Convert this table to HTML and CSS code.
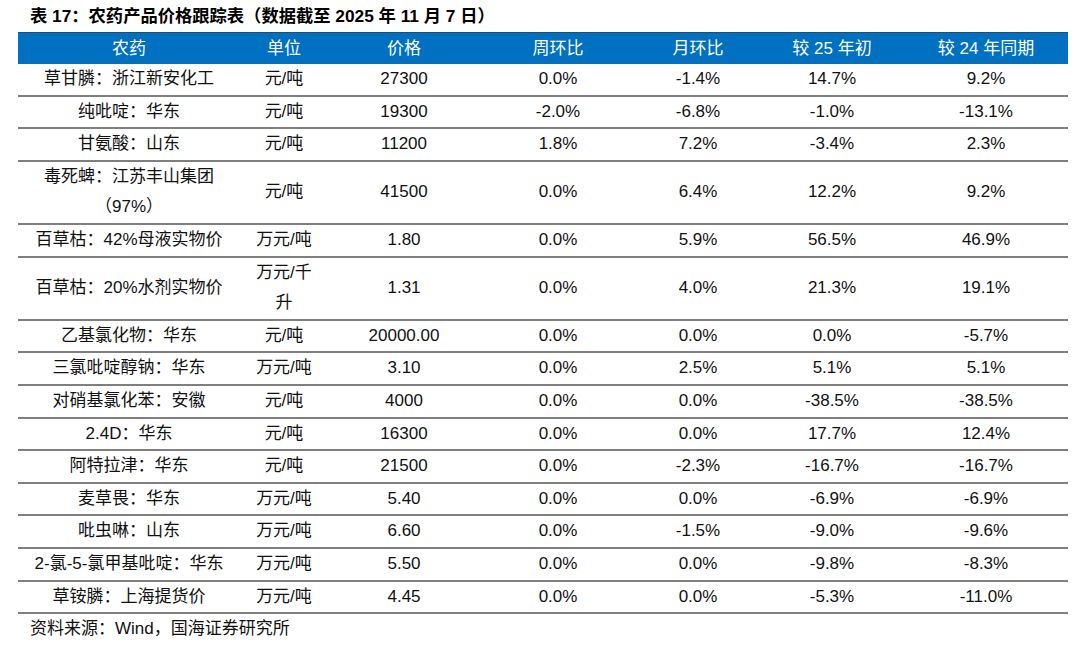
FILE: index.html
```html
<!DOCTYPE html>
<html lang="zh-CN">
<head>
<meta charset="utf-8">
<title>农药产品价格跟踪表</title>
<link rel="stylesheet" href="styles.css">
</head>
<body>
<div class="page">
  <div class="title">表 17：农药产品价格跟踪表（数据截至 2025 年 11 月 7 日）</div>
  <table class="tbl">
    <colgroup>
      <col class="c1"><col class="c2"><col class="c3"><col class="c4"><col class="c5"><col class="c6"><col class="c7">
    </colgroup>
    <thead>
      <tr><th>农药</th><th>单位</th><th>价格</th><th>周环比</th><th>月环比</th><th>较 25 年初</th><th>较 24 年同期</th></tr>
    </thead>
    <tbody>
      <tr><td>草甘膦：浙江新安化工</td><td>元/吨</td><td>27300</td><td>0.0%</td><td>-1.4%</td><td>14.7%</td><td>9.2%</td></tr>
      <tr><td>纯吡啶：华东</td><td>元/吨</td><td>19300</td><td>-2.0%</td><td>-6.8%</td><td>-1.0%</td><td>-13.1%</td></tr>
      <tr><td>甘氨酸：山东</td><td>元/吨</td><td>11200</td><td>1.8%</td><td>7.2%</td><td>-3.4%</td><td>2.3%</td></tr>
      <tr><td>毒死蜱：江苏丰山集团<br>（97%）</td><td>元/吨</td><td>41500</td><td>0.0%</td><td>6.4%</td><td>12.2%</td><td>9.2%</td></tr>
      <tr><td>百草枯：42%母液实物价</td><td>万元/吨</td><td>1.80</td><td>0.0%</td><td>5.9%</td><td>56.5%</td><td>46.9%</td></tr>
      <tr><td>百草枯：20%水剂实物价</td><td>万元/千<br>升</td><td>1.31</td><td>0.0%</td><td>4.0%</td><td>21.3%</td><td>19.1%</td></tr>
      <tr><td>乙基氯化物：华东</td><td>元/吨</td><td>20000.00</td><td>0.0%</td><td>0.0%</td><td>0.0%</td><td>-5.7%</td></tr>
      <tr><td>三氯吡啶醇钠：华东</td><td>万元/吨</td><td>3.10</td><td>0.0%</td><td>2.5%</td><td>5.1%</td><td>5.1%</td></tr>
      <tr><td>对硝基氯化苯：安徽</td><td>元/吨</td><td>4000</td><td>0.0%</td><td>0.0%</td><td>-38.5%</td><td>-38.5%</td></tr>
      <tr><td>2.4D：华东</td><td>元/吨</td><td>16300</td><td>0.0%</td><td>0.0%</td><td>17.7%</td><td>12.4%</td></tr>
      <tr><td>阿特拉津：华东</td><td>元/吨</td><td>21500</td><td>0.0%</td><td>-2.3%</td><td>-16.7%</td><td>-16.7%</td></tr>
      <tr><td>麦草畏：华东</td><td>万元/吨</td><td>5.40</td><td>0.0%</td><td>0.0%</td><td>-6.9%</td><td>-6.9%</td></tr>
      <tr><td>吡虫啉：山东</td><td>万元/吨</td><td>6.60</td><td>0.0%</td><td>-1.5%</td><td>-9.0%</td><td>-9.6%</td></tr>
      <tr><td>2-氯-5-氯甲基吡啶：华东</td><td>万元/吨</td><td>5.50</td><td>0.0%</td><td>0.0%</td><td>-9.8%</td><td>-8.3%</td></tr>
      <tr><td>草铵膦：上海提货价</td><td>万元/吨</td><td>4.45</td><td>0.0%</td><td>0.0%</td><td>-5.3%</td><td>-11.0%</td></tr>
    </tbody>
  </table>
  <div class="source">资料来源：Wind，国海证券研究所</div>
</div>
</body>
</html>
```

FILE: styles.css
```css
html, body {
  margin: 0;
  padding: 0;
  background: #ffffff;
}

body {
  font-family: "Liberation Sans", "Noto Sans CJK SC", sans-serif;
  font-size: 17px;
  color: #111111;
}

.page {
  padding: 4px 0 0 18px;
}

.title {
  font-weight: bold;
  font-size: 17.3px;
  line-height: 24px;
  padding-left: 12px;
  margin-bottom: 4px;
  color: #000000;
}

.tbl {
  width: 1050px;
  border-collapse: separate;
  border-spacing: 0;
  table-layout: fixed;
}

.c1 { width: 222px; }
.c2 { width: 88px; }
.c3 { width: 152px; }
.c4 { width: 156px; }
.c5 { width: 124px; }
.c6 { width: 144px; }
.c7 { width: 164px; }

.tbl th {
  background: #0070c0;
  color: #ffffff;
  font-weight: 400;
  height: 31px;
  line-height: 31px;
  padding: 0;
  border-top: 1px solid #2b4a66;
  text-align: center;
  white-space: nowrap;
}

.tbl td {
  text-align: center;
  line-height: 30.6px;
  padding: 0;
  border-bottom: 2px solid #7f7f7f;
  white-space: nowrap;
  vertical-align: middle;
}

.source {
  padding-left: 12px;
  margin-top: 3px;
  line-height: 24px;
  color: #111111;
}
```
